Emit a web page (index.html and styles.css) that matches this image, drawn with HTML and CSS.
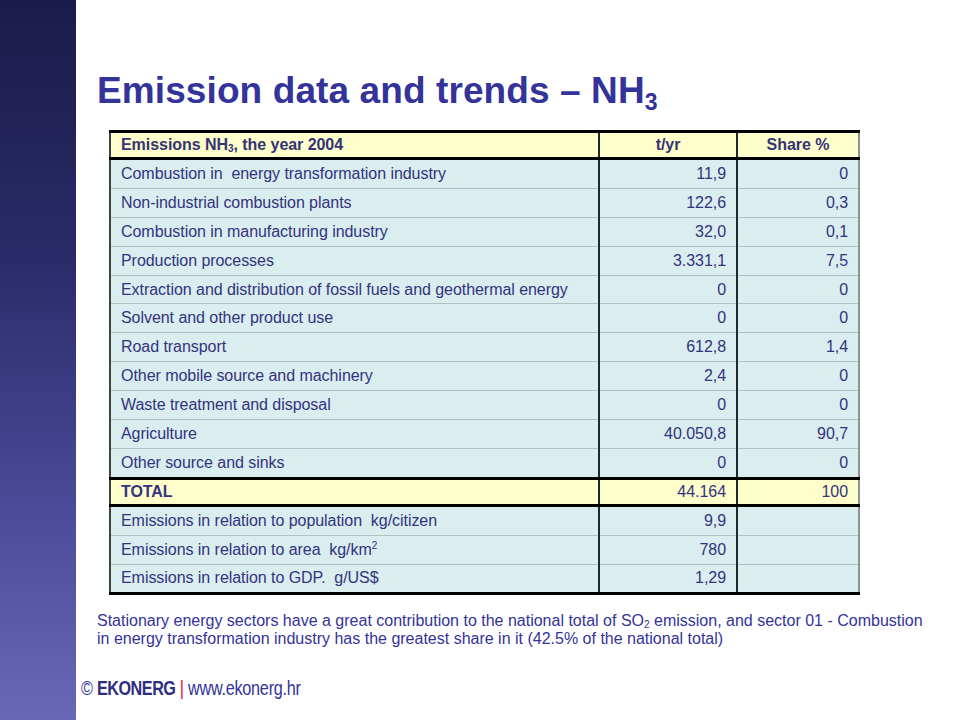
FILE: index.html
```html
<!DOCTYPE html>
<html>
<head>
<meta charset="utf-8">
<link rel="stylesheet" href="styles.css">
</head>
<body>
<div class="slide">
  <div class="sidebar"></div>
  <div class="main">
    <h1 class="title">Emission data and trends – NH<sub>3</sub></h1>
    <table class="data">
      <colgroup><col class="c1"><col class="c2"><col class="c3"></colgroup>
      <tr class="head">
        <th class="lbl">Emissions NH<sub>3</sub>, the year 2004</th>
        <th>t/yr</th>
        <th>Share %</th>
      </tr>
      <tr><td class="lbl">Combustion in&nbsp; energy transformation industry</td><td>11,9</td><td>0</td></tr>
      <tr><td class="lbl">Non-industrial combustion plants</td><td>122,6</td><td>0,3</td></tr>
      <tr><td class="lbl">Combustion in manufacturing industry</td><td>32,0</td><td>0,1</td></tr>
      <tr><td class="lbl">Production processes</td><td>3.331,1</td><td>7,5</td></tr>
      <tr><td class="lbl">Extraction and distribution of fossil fuels and geothermal energy</td><td>0</td><td>0</td></tr>
      <tr><td class="lbl">Solvent and other product use</td><td>0</td><td>0</td></tr>
      <tr><td class="lbl">Road transport</td><td>612,8</td><td>1,4</td></tr>
      <tr><td class="lbl">Other mobile source and machinery</td><td>2,4</td><td>0</td></tr>
      <tr><td class="lbl">Waste treatment and disposal</td><td>0</td><td>0</td></tr>
      <tr><td class="lbl">Agriculture</td><td>40.050,8</td><td>90,7</td></tr>
      <tr><td class="lbl">Other source and sinks</td><td>0</td><td>0</td></tr>
      <tr class="total"><td class="lbl">TOTAL</td><td>44.164</td><td>100</td></tr>
      <tr><td class="lbl">Emissions in relation to population&nbsp; kg/citizen</td><td>9,9</td><td></td></tr>
      <tr><td class="lbl">Emissions in relation to area&nbsp; kg/km<sup>2</sup></td><td>780</td><td></td></tr>
      <tr class="last"><td class="lbl">Emissions in relation to GDP.&nbsp; g/US$</td><td>1,29</td><td></td></tr>
    </table>
    <p class="note">Stationary energy sectors have a great contribution to the national total of SO<sub>2</sub> emission, and sector 01 - Combustion in energy transformation industry has the greatest share in it (42.5% of the national total)</p>
    <div class="footer">© <b class="brand">EKONERG</b> <span class="sep">|</span> www.ekonerg.hr</div>
  </div>
</div>
</body>
</html>
```

FILE: styles.css
```css
html, body {
  margin: 0;
  padding: 0;
  background: #ffffff;
}

.slide {
  display: flex;
  width: 960px;
  height: 720px;
  overflow: hidden;
  font-family: "Liberation Sans", Arial, sans-serif;
}

.sidebar {
  width: 76px;
  flex: none;
  background: linear-gradient(to bottom, #1b1b4b 0%, #2a2a68 35%, #4a4a98 70%, #6868b6 100%);
}

.main {
  flex: 1;
  padding-top: 71px;
  padding-left: 21px;
}

.title {
  margin: 0;
  font-size: 37px;
  line-height: 40px;
  font-weight: bold;
  color: #333399;
  letter-spacing: 0.1px;
}

.title sub {
  font-size: 23px;
  vertical-align: -7px;
  line-height: 0;
}

.data {
  margin-top: 19px;
  margin-left: 12px;
  border-collapse: collapse;
  width: 749px;
  table-layout: fixed;
  font-size: 16px;
  color: #333380;
}

.c1 { width: 489px; }
.c2 { width: 138px; }
.c3 { width: 122px; }

.data td, .data th {
  height: 27.9px;
  padding: 0 10px;
  text-align: right;
  background: #daedef;
  border-top: 1px solid #b4c0c2;
  border-bottom: 1px solid #b4c0c2;
  border-left: 2px solid #1e2a2e;
  border-right: 2px solid #1e2a2e;
  white-space: nowrap;
  letter-spacing: -0.05px;
}

.data td:first-child, .data th:first-child {
  border-left: 2px solid #3c4446;
}

.data td:last-child, .data th:last-child {
  border-right: 2px solid #8a9496;
}

.data .lbl {
  text-align: left;
}

.data th {
  height: 24px;
  font-weight: bold;
  text-align: center;
  background: #ffffcc;
  color: #333377;
  border-top: 3px solid #000;
  border-bottom: 3px solid #000;
}

.data th.lbl {
  text-align: left;
}

.data sub, .data sup {
  font-size: 10px;
  line-height: 0;
}

.data sub { vertical-align: -2px; }
.data sup { vertical-align: 6px; }

.total td {
  height: 24px;
  background: #ffffcc;
  border-top: 3px solid #000;
  border-bottom: 3px solid #000;
}

.total td.lbl {
  font-weight: bold;
}

.last td {
  height: 27px;
  border-bottom: 3px solid #000;
}

.note {
  margin: 17px 0 0 0;
  width: 835px;
  font-size: 16px;
  line-height: 18.5px;
  color: #333399;
  letter-spacing: 0;
}

.note sub {
  font-size: 10px;
  line-height: 0;
  vertical-align: -2px;
}

.footer {
  margin-top: 28px;
  margin-left: -16px;
  font-size: 20px;
  line-height: 22px;
  color: #333399;
  letter-spacing: -0.3px;
  white-space: nowrap;
  transform: scaleX(0.81);
  transform-origin: left center;
}

.brand {
  color: #2e2e80;
  letter-spacing: -0.6px;
}

.sep {
  color: #cc2233;
}
```
